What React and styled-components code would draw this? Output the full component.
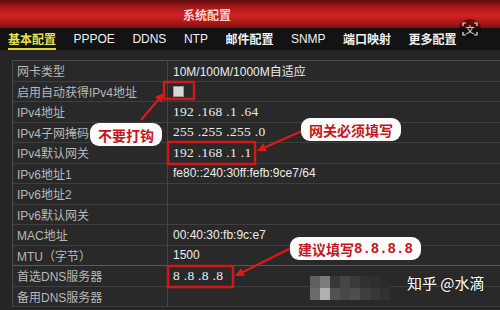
import React from 'react';
import styled, { createGlobalStyle } from 'styled-components';

const GlobalStyle = createGlobalStyle`
  html, body { margin: 0; padding: 0; background: #232323; }
  body { width: 500px; height: 310px; overflow: hidden; }
`;

const Page = styled.div`
  position: relative;
  width: 500px;
  height: 310px;
  display: flex;
  flex-direction: column;
  background: #252525;
  font-family: "Liberation Sans", "Noto Sans CJK SC", sans-serif;
  overflow: hidden;
`;

const Header = styled.div`
  height: 28px;
  display: flex;
  align-items: center;
  justify-content: center;
  background: linear-gradient(#5e0d0d 0%, #a81818 25%, #d02222 55%, #a51616 85%, #7a1010 100%);
  color: #f6d6d6;
  font-family: "Noto Sans CJK SC", sans-serif;
  font-size: 12px;
  font-weight: 700;
  padding-right: 86px;
`;

const TabBar = styled.div`
  height: 22px;
  display: flex;
  align-items: center;
  gap: 17.5px;
  padding-left: 8px;
  background: #131313;
`;

const Tab = styled.div`
  position: relative;
  height: 22px;
  line-height: 22px;
  font-size: 12px;
  font-weight: ${({ $cjk }) => ($cjk ? 700 : 400)};
  font-family: ${({ $cjk }) =>
    $cjk ? '"Noto Sans CJK SC", sans-serif' : '"Liberation Sans", sans-serif'};
  color: ${({ $active }) => ($active ? '#e9e24a' : '#f2f2f2')};
  border-bottom: 2px solid ${({ $active }) => ($active ? '#e0d63a' : 'transparent')};
  box-sizing: border-box;
`;

const TranslateBadge = styled.div`
  position: absolute;
  left: 459px;
  top: 19px;
  width: 22px;
  height: 20px;
  border-radius: 50%;
  background: rgba(20, 10, 10, 0.55);
  display: flex;
  align-items: center;
  justify-content: center;
`;

const Table = styled.div`
  margin: 10px 0 0 12px;
  display: grid;
  grid-template-columns: 155px 1fr;
  border-top: 1px solid #4a4a4a;
  border-left: 1px solid #4a4a4a;
`;

const Cell = styled.div`
  height: 20.5px;
  box-sizing: border-box;
  display: flex;
  align-items: center;
  border-bottom: 1px solid ${({ $split }) => ($split ? '#5a5a5a' : '#3f3f3f')};
  background: #292929;
`;

const Label = styled(Cell)`
  padding-left: 4px;
  color: #b8b8b8;
  font-size: 12px;
  font-family: "Liberation Sans", "Noto Sans CJK SC", sans-serif;
  border-right: 1px solid #444;
`;

const Value = styled(Cell)`
  padding-left: 5px;
  color: #ececec;
  font-size: ${({ $serif }) => ($serif ? '13.5px' : '12px')};
  letter-spacing: ${({ $serif }) => ($serif ? '0.3px' : '0')};
  font-family: ${({ $serif }) =>
    $serif ? '"Liberation Serif", serif' : '"Liberation Sans", "Noto Sans CJK SC", sans-serif'};
`;

const Checkbox = styled.span`
  width: 9px;
  height: 9px;
  background: #d8d8d8;
  border: 1px solid #999;
`;

const Callout = styled.div`
  position: absolute;
  left: ${({ $x }) => $x}px;
  top: ${({ $y }) => $y}px;
  height: 23px;
  padding: 0 8px;
  display: flex;
  align-items: center;
  background: #fbfbfb;
  border-radius: 9px;
  color: #c4161c;
  font-size: 14px;
  font-weight: 700;
  font-family: "Noto Sans CJK SC", sans-serif;
  white-space: nowrap;
`;

const Mono = styled.span`
  font-family: "Liberation Mono", monospace;
  font-weight: 700;
`;

const Overlay = styled.svg`
  position: absolute;
  left: 0;
  top: 0;
  pointer-events: none;
`;

const Mosaic = styled.div`
  position: absolute;
  left: 310px;
  top: 276px;
  display: grid;
  grid-template-columns: repeat(8, 10px);
  grid-auto-rows: 12px;
  opacity: 0.85;
`;

const Tile = styled.div`
  background: ${({ $c }) => $c};
`;

const Watermark = styled.div`
  position: absolute;
  left: 407px;
  top: 272px;
  color: #ffffff;
  font-size: 15px;
  font-family: "Noto Sans CJK SC", sans-serif;
  text-shadow: 0 0 2px rgba(0, 0, 0, 0.6);
`;

const tabs = [
  { name: '基本配置', cjk: true, active: true },
  { name: 'PPPOE' },
  { name: 'DDNS' },
  { name: 'NTP' },
  { name: '邮件配置', cjk: true },
  { name: 'SNMP' },
  { name: '端口映射', cjk: true },
  { name: '更多配置', cjk: true },
];

const rows = [
  { label: '网卡类型', value: '10M/100M/1000M自适应' },
  { label: '启用自动获得IPv4地址', check: true },
  { label: 'IPv4地址', value: '192 .168 .1 .64', serif: true },
  { label: 'IPv4子网掩码', value: '255 .255 .255 .0', serif: true },
  { label: 'IPv4默认网关', value: '192 .168 .1 .1', serif: true },
  { label: 'IPv6地址1', value: 'fe80::240:30ff:fefb:9ce7/64' },
  { label: 'IPv6地址2', value: '' },
  { label: 'IPv6默认网关', value: '' },
  { label: 'MAC地址', value: '00:40:30:fb:9c:e7' },
  { label: 'MTU（字节）', value: '1500', split: true },
  { label: '首选DNS服务器', value: '8 .8 .8 .8', serif: true },
  { label: '备用DNS服务器', value: '' },
];

const mosaic = [
  '#6a6a6a', '#8a8a8a', '#3a3a3a', '#4a4a4a', '#3c3c3c', '#333', '#2f2f2f', '#2a2a2a',
  '#777', '#c8c8c8', '#5a5a5a', '#4e4e4e', '#555', '#444', '#3a3a3a', '#333',
];

function Arrow({ x1, y1, x2, y2 }) {
  const a = Math.atan2(y2 - y1, x2 - x1);
  const len = 9;
  const w = 4.5;
  const bx = x2 - len * Math.cos(a);
  const by = y2 - len * Math.sin(a);
  const px = -Math.sin(a) * w;
  const py = Math.cos(a) * w;
  return (
    <g>
      <line x1={x1} y1={y1} x2={bx} y2={by} stroke="#e01818" strokeWidth="2.2" />
      <polygon points={`${x2},${y2} ${bx + px},${by + py} ${bx - px},${by - py}`} fill="#e01818" />
    </g>
  );
}

export default function App() {
  return (
    <>
      <GlobalStyle />
      <Page>
        <Header>系统配置</Header>
        <TabBar>
          {tabs.map(t => (
            <Tab key={t.name} $cjk={t.cjk} $active={t.active}>{t.name}</Tab>
          ))}
        </TabBar>
        <TranslateBadge>
          <svg width="16" height="14" viewBox="0 0 16 14">
            <path d="M1 4V1h3M12 1h3v3M15 10v3h-3M4 13H1v-3" fill="none" stroke="#e8e8e8" strokeWidth="1.2" />
            <text x="8" y="10.5" textAnchor="middle" fontSize="9" fill="#e8e8e8" fontFamily="Noto Sans CJK SC, sans-serif">文</text>
          </svg>
        </TranslateBadge>
        <Table>
          {rows.map(r => (
            <React.Fragment key={r.label}>
              <Label $split={r.split}>{r.label}</Label>
              <Value $serif={r.serif} $split={r.split}>
                {r.check ? <Checkbox /> : r.value}
              </Value>
            </React.Fragment>
          ))}
        </Table>

        <Mosaic>
          {mosaic.map((c, i) => <Tile key={i} $c={c} />)}
        </Mosaic>
        <Watermark>知乎 @水滴</Watermark>

        <Overlay width="500" height="310">
          <rect x="164" y="82" width="30" height="17" fill="none" stroke="#d01818" strokeWidth="2.5" />
          <rect x="168" y="142" width="87" height="22" fill="none" stroke="#d01818" strokeWidth="2.5" />
          <rect x="168" y="266" width="65" height="21" fill="none" stroke="#d01818" strokeWidth="2.5" />
          <Arrow x1={141} y1={120} x2={164} y2={93} />
          <Arrow x1={302} y1={131} x2={257} y2={151} />
          <Arrow x1={291} y1={248} x2={235} y2={276} />
        </Overlay>

        <Callout $x={90} $y={123}>不要打钩</Callout>
        <Callout $x={301} $y={118}>网关必须填写</Callout>
        <Callout $x={290} $y={237}>建议填写<Mono>8.8.8.8</Mono></Callout>
      </Page>
    </>
  );
}
